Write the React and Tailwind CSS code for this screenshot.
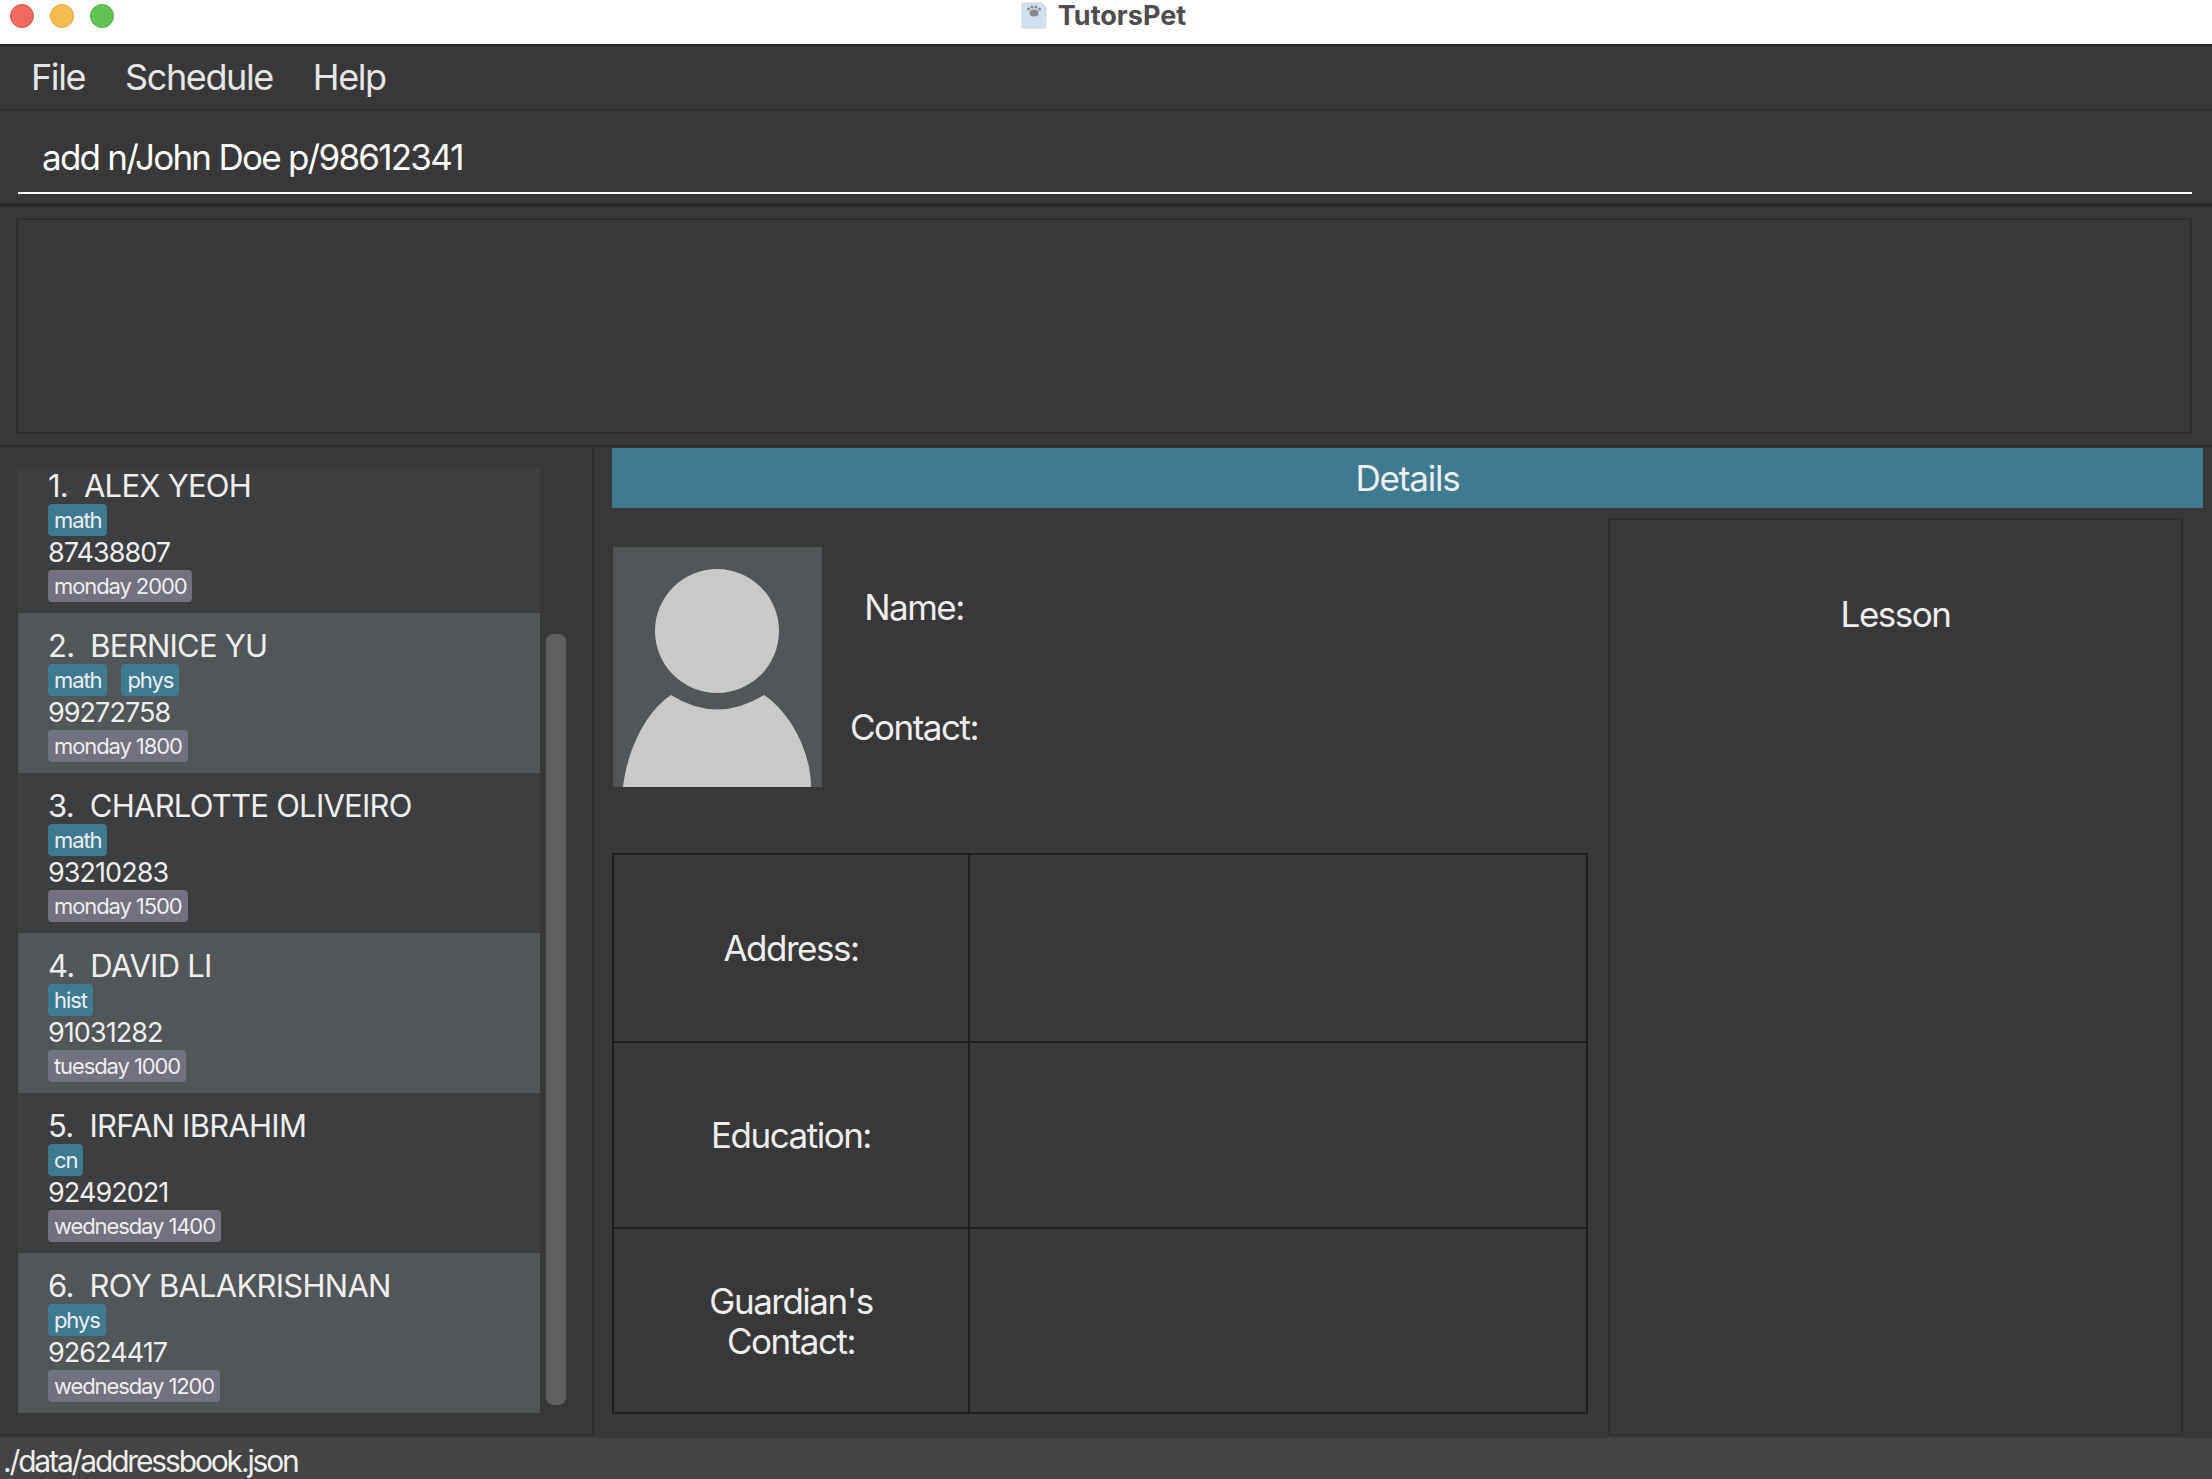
const students = [
  { name: '1.  ALEX YEOH', tags: ['math'], phone: '87438807', lesson: 'monday 2000' },
  { name: '2.  BERNICE YU', tags: ['math', 'phys'], phone: '99272758', lesson: 'monday 1800' },
  { name: '3.  CHARLOTTE OLIVEIRO', tags: ['math'], phone: '93210283', lesson: 'monday 1500' },
  { name: '4.  DAVID LI', tags: ['hist'], phone: '91031282', lesson: 'tuesday 1000' },
  { name: '5.  IRFAN IBRAHIM', tags: ['cn'], phone: '92492021', lesson: 'wednesday 1400' },
  { name: '6.  ROY BALAKRISHNAN', tags: ['phys'], phone: '92624417', lesson: 'wednesday 1200' },
];

const TitleBar = () => (
  <div className="grid h-[44px] shrink-0 grid-cols-[1fr_auto_1fr] items-start bg-white">
    <div className="flex gap-[16px] pt-[4px] pl-[10px]">
      <span className="h-[24px] w-[24px] rounded-full border border-[#d9534c] bg-[#ee6a5f]" />
      <span className="h-[24px] w-[24px] rounded-full border border-[#dfa23b] bg-[#f5bd4f]" />
      <span className="h-[24px] w-[24px] rounded-full border border-[#4fae45] bg-[#61c454]" />
    </div>
    <div className="flex items-center gap-[11px] pt-[1px] pr-[5px]">
      <svg width="26" height="28" viewBox="0 0 26 28">
        <path d="M1 2 H20 L25 6 V27 H1 Z" fill="#cfe0f0" stroke="#d5d5d5" />
        <ellipse cx="13" cy="12" rx="4.5" ry="3.5" fill="#8a8a8a" />
        <circle cx="7.5" cy="8" r="1.6" fill="#8a8a8a" />
        <circle cx="11" cy="6" r="1.6" fill="#8a8a8a" />
        <circle cx="15" cy="6" r="1.6" fill="#8a8a8a" />
        <circle cx="18.5" cy="8" r="1.6" fill="#8a8a8a" />
      </svg>
      <span className="text-[27px] leading-none font-bold text-[#4d4d4d]">TutorsPet</span>
    </div>
    <div />
  </div>
);

const MenuBar = () => (
  <div className="flex h-[67px] shrink-0 items-center gap-[40px] border-y-2 border-y-[#2a2a2a] border-b-[#2e2e2e] bg-[#383838] pb-[2px] pl-[31px] text-[36px] tracking-[-1.4px] text-[#e6e6e6]">
    <span>File</span>
    <span>Schedule</span>
    <span>Help</span>
  </div>
);

const CommandBox = () => (
  <div className="h-[96px] shrink-0 border-b-4 border-b-[#2c2c2c] bg-[#383838] pt-[16px] pr-[20px] pl-[18px]">
    <div className="h-[67px] border-b-2 border-b-white pl-[24px] text-[35px] leading-[61px] tracking-[-1.75px] text-white">
      add n/John Doe p/98612341
    </div>
  </div>
);

const ResultBox = () => (
  <div className="h-[240px] shrink-0 border-b-2 border-b-[#2c2c2c] bg-[#383838] pt-[11px] pr-[20px] pl-[16px]">
    <div className="h-[216px] border-2 border-[#2e2e2e]" />
  </div>
);

const Chip = ({ color, children }) => (
  <span className={`flex h-[32px] items-center rounded-[4px] px-[6px] text-[22px] tracking-[-1.1px] text-[#eeeeee] ${color}`}>
    {children}
  </span>
);

// the first row is scrolled a little out of the list, so it shows shorter
const StudentRow = ({ student, alt, first }) => (
  <div className={`pl-[30px] ${first ? 'h-[144px] pt-[4px]' : 'h-[160px] pt-[20px]'} ${alt ? 'bg-[#515658]' : 'bg-[#3c3e3f]'}`}>
    <div className="h-[31px] text-[31px] leading-[25px] tracking-[-0.75px] whitespace-pre text-[#eeeeee]">{student.name}</div>
    <div className="flex gap-[14px]">
      {student.tags.map((t) => (
        <Chip key={t} color="bg-[#3e7b91]">{t}</Chip>
      ))}
    </div>
    <div className="h-[34px] text-[27px] leading-[34px] tracking-[-0.95px] text-[#eeeeee]">{student.phone}</div>
    <div className="flex">
      <Chip color="bg-[#72717f]">{student.lesson}</Chip>
    </div>
  </div>
);

const StudentList = () => (
  <div className="mb-[2px] flex w-[594px] shrink-0 border-r-2 border-b-2 border-r-[#2e2e2e] border-b-[#2e2e2e] pt-[22px] pl-[18px]">
    <div className="h-[944px] w-[522px]">
      {students.map((s, i) => (
        <StudentRow key={s.name} student={s} alt={i % 2 === 1} first={i === 0} />
      ))}
    </div>
    <div className="mt-[165px] ml-[6px] h-[771px] w-[20px] rounded-[8px] bg-[#606060]" />
  </div>
);

const Avatar = () => (
  <svg width="209" height="240" viewBox="0 0 209 240" className="shrink-0">
    <rect width="209" height="240" fill="#515658" />
    <circle cx="104" cy="84" r="62" fill="#c9c9c9" />
    <path d="M10 240 C14 205 32 165 58 148 Q104 177 151 148 C178 166 198 205 198 240 Z" fill="#c9c9c9" />
  </svg>
);

const tableRows = [
  { label: 'Address:', h: 'h-[186px]' },
  { label: 'Education:', h: 'h-[186px]' },
  { label: "Guardian's\nContact:", h: 'h-[185px]' },
];

const DetailTable = () => (
  <div className="border-2 border-[#1e1e1e]">
    {tableRows.map((row, i) => (
      <div key={row.label} className={`flex ${row.h} ${i > 0 ? 'border-t-2 border-t-[#1e1e1e]' : ''}`}>
        <div className="flex w-[356px] items-center justify-center border-r-2 border-r-[#1e1e1e] text-center text-[35px] leading-[40px] tracking-[-1.5px] whitespace-pre-line text-[#eeeeee]">
          {row.label}
        </div>
        <div className="flex-1" />
      </div>
    ))}
  </div>
);

const DetailsPanel = () => (
  <div className="flex min-w-0 flex-1 flex-col pt-[1px] pr-[9px] pl-[18px]">
    <div className="flex h-[60px] shrink-0 items-center justify-center bg-[#3e7b91] text-[35px] tracking-[-1.2px] text-[#eeeeee]">
      Details
    </div>
    <div className="mt-[10px] flex flex-1 gap-[20px] pr-[20px]">
      <div className="w-[976px] shrink-0 pt-[29px]">
        <div className="flex">
          <div className="pl-[1px]"><Avatar /></div>
          <div className="ml-[27px] flex w-[130px] flex-col items-center gap-[84px] pt-[42px] text-[35px] leading-[36px] tracking-[-1.5px] text-[#eeeeee]">
            <span>Name:</span>
            <span>Contact:</span>
          </div>
        </div>
        <div className="mt-[66px]"><DetailTable /></div>
      </div>
      <div className="mb-[2px] flex-1 border-2 border-[#2e2e2e] pt-[72px] text-center text-[35px] leading-[44px] tracking-[-1.5px] text-[#eeeeee]">
        Lesson
      </div>
    </div>
  </div>
);

export default function App() {
  return (
    <div className="flex h-[1479px] w-[2212px] flex-col overflow-hidden bg-[#383838] font-['Inter','Noto_Sans',sans-serif]">
      <TitleBar />
      <MenuBar />
      <CommandBox />
      <ResultBox />
      <div className="flex min-h-0 flex-1">
        <StudentList />
        <DetailsPanel />
      </div>
      <div className="h-[41px] shrink-0 bg-[#444444] pl-[3px] text-[30px] leading-[46px] tracking-[-2.15px] text-[#eeeeee]">
        ./data/addressbook.json
      </div>
    </div>
  );
}
